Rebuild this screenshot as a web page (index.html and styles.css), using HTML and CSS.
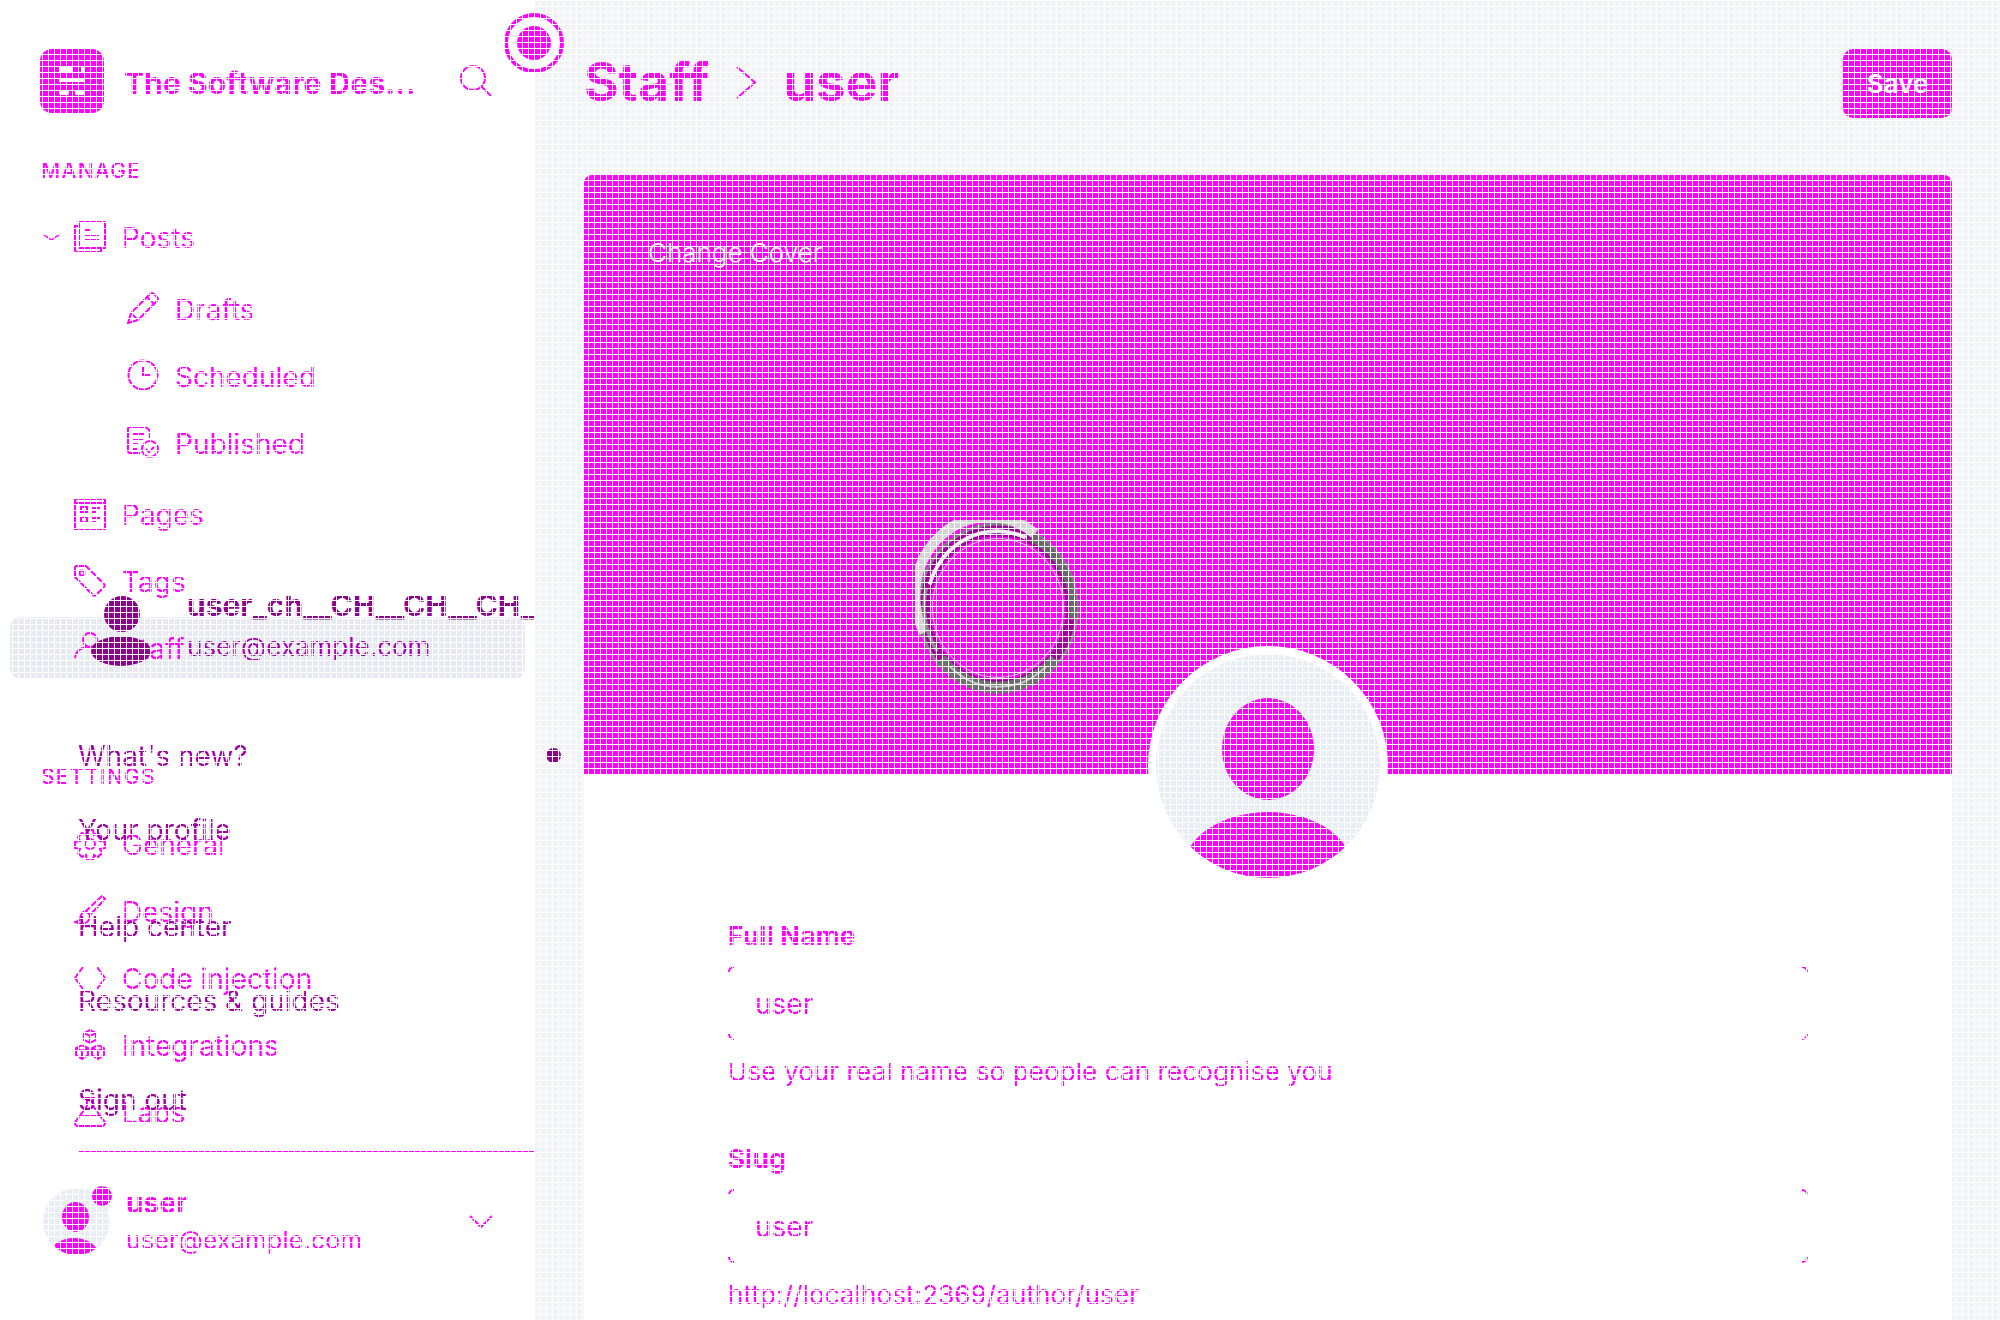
FILE: index.html
```html
<!DOCTYPE html>
<html>
	<head>
		<meta charset="UTF-8">
		<title>Staff - user</title>
		<link rel="stylesheet" href="styles.css">
	</head>
	<body>
		<div class="app">
			<aside class="side">
				<div class="brand">
					<svg class="logo" viewBox="0 0 64 64"><rect width="64" height="64" rx="12" fill="#f0f"/><path d="M19 18h14v5H19zM41 18h4v5h-4zM19 29h26v4H19z" fill="#fff"/><rect x="19" y="41" width="10" height="5" rx="2" fill="#fff"/><rect x="35" y="41" width="10" height="5" rx="2" fill="#fff"/></svg>
					<span class="brand-name">The Software Des...</span>
					<svg class="search" viewBox="0 0 32 32"><circle cx="13" cy="13" r="12"/><path d="M22 22l9 9"/></svg>
				</div>

				<div class="nav-title first">MANAGE</div>
				<ul class="nav first">
					<li class="row parent">
						<svg class="caret" viewBox="0 0 17 8"><path d="M0 1l8.5 6L17 1"/></svg>
						<svg class="ico" viewBox="0 0 32 32"><path d="M5 1h26v26H5zM5 5H1v24a2 2 0 0 0 2 2h24v-4M11 9h6M11 14h14M11 19h14"/></svg>
						<span>Posts</span>
					</li>
					<li class="row sub first-sub">
						<svg class="ico" viewBox="0 0 32 32"><path d="M1 31l3-10L23 2a3 3 0 0 1 4 0l3 3a3 3 0 0 1 0 4L11 28zM4 21l7 7M20 5l7 7M7 18l14-14M14 25L28 11"/></svg>
						<span>Drafts</span>
					</li>
					<li class="row sub">
						<svg class="ico" viewBox="0 0 32 32"><circle cx="16" cy="16" r="14.5"/><path d="M16 7v9h7"/></svg>
						<span>Scheduled</span>
					</li>
					<li class="row sub">
						<svg class="ico" viewBox="0 0 32 32"><path d="M13 27H3a2 2 0 0 1-2-2V3a2 2 0 0 1 2-2h16l4 4v8M6 8h12M6 13h10M6 18h6M6 23h4"/><circle cx="23" cy="23" r="8"/><path d="M19 23l3 3 5-5"/></svg>
						<span>Published</span>
					</li>
					<li class="row after-sub">
						<svg class="ico" viewBox="0 0 32 32"><path d="M1 1h30v30H1zM7 9h6v5H7zM7 19h6v5H7zM18 10h8M18 14h5M18 20h8M18 24h5M1 5h30"/></svg>
						<span>Pages</span>
					</li>
					<li class="row">
						<svg class="ico" viewBox="0 0 32 32"><path d="M1 3a2 2 0 0 1 2-2h9l18 18a2 2 0 0 1 0 3l-8 8a2 2 0 0 1-3 0L1 12z"/><circle cx="8" cy="8" r="2.5"/></svg>
						<span>Tags</span>
					</li>
					<li class="row active">
						<svg class="ico" viewBox="0 0 32 32"><circle cx="16" cy="8" r="7"/><path d="M1 26c1-8 7-11 15-11"/><circle cx="24" cy="25" r="1"/></svg>
						<span>Staff</span>
					</li>
				</ul>

				<div class="nav-title settings">SETTINGS</div>
				<ul class="nav second">
					<li class="row">
						<svg class="ico" viewBox="0 0 32 32"><circle cx="16" cy="16" r="5"/><path d="M13 2h6l1 5 4-2 4 4-2 4 5 1v6l-5 1 2 4-4 4-4-2-1 5h-6l-1-5-4 2-4-4 2-4-5-1v-6l5-1-2-4 4-4 4 2z"/></svg>
						<span>General</span>
					</li>
					<li class="row">
						<svg class="ico" viewBox="0 0 32 32"><path d="M28 1l3 3-15 16-4-4zM12 16c-5 0-5 5-6 8-1 2-3 3-5 3 5 3 15 3 15-7"/></svg>
						<span>Design</span>
					</li>
					<li class="row">
						<svg class="ico" viewBox="0 0 32 32"><path d="M9 5L1 16l8 11M23 5l8 11-8 11"/></svg>
						<span>Code injection</span>
					</li>
					<li class="row">
						<svg class="ico" viewBox="0 0 32 32"><path d="M16 1l6 3v7l-6 3-6-3V4zM16 7v7M10 4l6 3 6-3M8 16l6 3v7l-6 4-6-4v-7zM8 22v8M2 19l6 3 6-3M24 16l6 3v7l-6 4-6-4v-7zM24 22v8M18 19l6 3 6-3"/></svg>
						<span>Integrations</span>
					</li>
					<li class="row">
						<svg class="ico" viewBox="0 0 32 32"><path d="M11 2h10M13 2v8L2 25a3 3 0 0 0 3 5h22a3 3 0 0 0 3-5L19 10V2M7 20h18"/></svg>
						<span>Labs</span>
					</li>
				</ul>

				<div class="me">
					<div class="me-pic">
						<svg viewBox="0 0 67 67"><defs><clipPath id="mc"><circle cx="33.5" cy="33.5" r="33.5"/></clipPath></defs><g clip-path="url(#mc)"><rect width="67" height="67" fill="#e8eef3"/><ellipse cx="32.5" cy="29" rx="13.5" ry="15" fill="#f0f"/><ellipse cx="31" cy="66" rx="24" ry="16" fill="#f0f"/></g></svg>
						<i class="me-dot"></i>
					</div>
					<div class="me-text">
						<b>user</b>
						<span>user@example.com</span>
					</div>
					<svg class="me-caret" viewBox="0 0 24 13"><path d="M1 1l11 11L23 1"/></svg>
				</div>

				<div class="pulse"><i></i></div>

				<div class="menu">
					<div class="menu-head">
						<svg class="menu-pic" viewBox="0 0 60 70"><circle cx="31" cy="18" r="18"/><ellipse cx="30" cy="55" rx="30" ry="15"/></svg>
						<div class="menu-who">
							<b>user_ch__CH__CH__CH__CH</b>
							<span>user@example.com</span>
						</div>
					</div>
					<div class="menu-list top-group">
						<a>What's new?</a>
						<a>Your profile</a>
					</div>
					<div class="menu-list">
						<a>Help center</a>
						<a>Resources &amp; guides</a>
					</div>
					<div class="menu-list">
						<a>Sign out</a>
					</div>
					<div class="menu-line"></div>
				</div>
			</aside>

			<main class="main">
				<i class="whatsnew-dot"></i>
				<header class="top">
					<h1>Staff <svg class="crumb" viewBox="0 0 20 33"><path d="M1 1l18 15.5L1 32"/></svg> user</h1>
					<button class="save">Save</button>
				</header>

				<section class="card">
					<div class="cover">
						<span class="cover-btn">Change Cover</span>
						<svg class="ring" viewBox="0 0 180 180" preserveAspectRatio="none">
							<circle cx="90" cy="90" r="86" class="r-out"/>
							<circle cx="90" cy="90" r="79" class="r-mid"/>
							<circle cx="90" cy="90" r="71" class="r-thin"/>
							<path d="M10 115A80 80 0 0 1 130 14" class="r-light"/>
							<path d="M16 66A76 76 0 0 1 120 18" class="r-light2"/>
							<path d="M28 142A80 80 0 0 0 152 142" class="r-dark"/>
							<path d="M38 150A76 76 0 0 0 142 150" class="r-light3"/>
							<path d="M126 18A80 80 0 0 1 171 100" class="r-dark2"/>
							<path d="M12 70A80 80 0 0 0 24 134" class="r-dark3"/>
						</svg>
					</div>
					<svg class="avatar" viewBox="0 0 240 240">
						<defs><clipPath id="ac"><circle cx="120" cy="120" r="112"/></clipPath></defs>
						<circle cx="120" cy="120" r="120" fill="#fff"/>
						<g clip-path="url(#ac)">
							<rect width="240" height="240" fill="#e8eef3"/>
							<ellipse cx="120" cy="103" rx="46" ry="51" fill="#f0f"/>
							<ellipse cx="120" cy="226" rx="86" ry="60" fill="#f0f"/>
						</g>
					</svg>

					<form class="form">
						<div class="field">
							<label>Full Name</label>
							<div class="input">user<i class="tl"></i><i class="tr"></i><i class="bl"></i><i class="br"></i></div>
							<p>Use your real name so people can recognise you</p>
						</div>
						<div class="field">
							<label>Slug</label>
							<div class="input">user<i class="tl"></i><i class="tr"></i><i class="bl"></i><i class="br"></i></div>
							<p>http://localhost:2369/author/user</p>
						</div>
					</form>
				</section>
			</main>
		</div>
	</body>
</html>
```

FILE: styles.css
```css
*{
	box-sizing: border-box;
}
html,body{
	margin: 0;
	padding: 0;
	height: 1320px;
	overflow: hidden;
	background: #f1f3f7;
	font-family: Inter, "Liberation Sans", sans-serif;
	color: #f0f;
}
/* 6px white lattice over the whole page */
body::after{
	content: "";
	position: fixed;
	left: 0;
	top: 0;
	right: 0;
	bottom: 0;
	z-index: 100;
	pointer-events: none;
	background-image:
		repeating-linear-gradient(to right, #fff 0, #fff 1px, transparent 1px, transparent 6px),
		repeating-linear-gradient(to bottom, #fff 0, #fff 1px, transparent 1px, transparent 6px);
}
svg{
	display: block;
}
.app{
	display: flex;
	height: 1320px;
}

/* sidebar */
.side{
	position: relative;
	width: 535px;
	flex: none;
	background: #fff;
}
.brand{
	display: flex;
	align-items: center;
	height: 64px;
	margin: 49px 0 0 40px;
}
.logo{
	width: 64px;
	height: 64px;
	margin-right: 20px;
}
.brand-name{
	padding-top: 4px;
	font-size: 30px;
	font-weight: 700;
	letter-spacing: 0.1px;
	white-space: nowrap;
}
.search{
	width: 32px;
	height: 32px;
	margin-left: auto;
	margin-right: 43px;
	fill: none;
	stroke: #f0f;
	stroke-width: 2;
}
.nav-title{
	height: 24px;
	line-height: 24px;
	margin-left: 41px;
	font-size: 21px;
	font-weight: 500;
	letter-spacing: 1.3px;
}
.nav-title.first{
	margin-top: 46px;
}
.nav-title.settings{
	margin-top: 86px;
}
.nav{
	list-style: none;
	margin: 25px 0 0 0;
	padding: 0;
}
.nav.first{
	margin-top: 23px;
}
.nav.second{
	margin-top: 24px;
	margin-bottom: 45px;
}
.row{
	display: flex;
	align-items: center;
	gap: 16px;
	height: 62px;
	margin: 0 10px 5px 10px;
	padding-left: 64px;
	border-radius: 10px;
	font-size: 28px;
}
.row span{
	padding-top: 2px;
}
.row.parent{
	padding-left: 33px;
	gap: 0;
	margin-bottom: 9px;
}
.row.parent .ico{
	margin: 0 16px 0 14px;
}
.row.sub{
	padding-left: 117px;
}
.row.sub span{
	padding-top: 4px;
}
.row.after-sub{
	margin-top: 10px;
}
.row.active{
	background: #e8eaf2;
}
.ico{
	width: 32px;
	height: 32px;
	flex: none;
	fill: none;
	stroke: #f0f;
	stroke-width: 2;
}
.caret{
	width: 17px;
	height: 8px;
	fill: none;
	stroke: #f0f;
	stroke-width: 1.5;
}

/* account at the foot of the sidebar */
.me{
	display: flex;
	align-items: center;
	margin: 0 42px 0 43px;
}
.me-pic{
	position: relative;
	width: 67px;
	height: 67px;
}
.me-dot{
	position: absolute;
	right: -2px;
	top: -2px;
	width: 20px;
	height: 20px;
	border-radius: 50%;
	background: #f0f;
}
.me-text{
	display: flex;
	flex-direction: column;
	gap: 7px;
	margin-left: 16px;
	font-size: 25px;
	letter-spacing: 0.15px;
}
.me-text b{
	font-size: 28px;
	font-weight: 700;
	line-height: 30px;
}
.me-text span{
	line-height: 30px;
}
.me-caret{
	width: 24px;
	height: 13px;
	margin-left: auto;
	fill: none;
	stroke: #f0f;
	stroke-width: 2;
}

/* beacon over the sidebar edge */
.pulse{
	position: absolute;
	left: 504px;
	top: 13px;
	z-index: 20;
	display: flex;
	align-items: center;
	justify-content: center;
	width: 60px;
	height: 60px;
	border: 4px solid #f0f;
	border-radius: 50%;
	background: #fff;
}
.pulse i{
	width: 34px;
	height: 34px;
	border-radius: 50%;
	background: #f0f;
}

/* open user menu, its panel colour is gone, only the ink shows */
.menu{
	position: absolute;
	left: 78px;
	top: 596px;
	z-index: 10;
	width: 457px;
	overflow: hidden;
	color: #a000a4;
	font-size: 28px;
}
.menu-head{
	display: flex;
	height: 120px;
	margin-bottom: 3px;
}
.menu-pic{
	width: 60px;
	height: 70px;
	margin: 0 36px 0 13px;
	flex: none;
	fill: #8e008e;
}
.menu-who{
	display: flex;
	flex-direction: column;
	gap: 16px;
	min-width: 0;
}
.menu-who b{
	margin-top: -2px;
	font-size: 30px;
	font-weight: 700;
	line-height: 22px;
	color: #8e008e;
	white-space: nowrap;
}
.menu-who span{
	font-size: 26px;
	line-height: 30px;
	color: #a800b4;
}
.menu-list{
	display: flex;
	flex-direction: column;
	margin-bottom: 25px;
}
.menu-list.top-group{
	margin-bottom: 23px;
}
.menu-list a{
	height: 74px;
	line-height: 74px;
	white-space: nowrap;
}
.menu-line{
	height: 2px;
	margin-top: -11px;
	background: #f0f;
}

/* main column */
.main{
	position: relative;
	flex: 1;
	min-width: 0;
	padding: 0 48px 0 49px;
}
.whatsnew-dot{
	position: absolute;
	left: 11px;
	top: 748px;
	width: 15px;
	height: 15px;
	border-radius: 50%;
	background: #8e008e;
}
.top{
	display: flex;
	align-items: flex-start;
	justify-content: space-between;
	height: 175px;
}
.top h1{
	display: flex;
	align-items: center;
	gap: 27px;
	margin: 47px 0 0 0;
	height: 70px;
	font-size: 53px;
	font-weight: 700;
}
.crumb{
	width: 20px;
	height: 33px;
	fill: none;
	stroke: #f0f;
	stroke-width: 2;
}
.save{
	width: 109px;
	height: 69px;
	margin-top: 49px;
	border: 0;
	border-radius: 10px;
	background: #f0f;
	color: #fff;
	font: 600 26px Inter, "Liberation Sans", sans-serif;
}
.card{
	position: relative;
	height: 1200px;
	border-radius: 8px 8px 0 0;
	background: #fff;
}
.cover{
	position: relative;
	height: 599px;
	border-radius: 8px 8px 0 0;
	background: #f0f;
}
.cover-btn{
	position: absolute;
	left: 64px;
	top: 64px;
	font-size: 26px;
	font-weight: 300;
	line-height: 28px;
	color: #fff;
}
.ring{
	position: absolute;
	left: 331px;
	top: 345px;
	width: 166px;
	height: 176px;
	fill: none;
}
.r-out{
	stroke: #808080;
	stroke-width: 3;
}
.r-mid{
	stroke: #a3009f;
	stroke-width: 11;
}
.r-thin{
	stroke: #c8c8c8;
	stroke-width: 1;
}
.r-light{
	stroke: #d4d4d4;
	stroke-width: 11;
}
.r-light2{
	stroke: #ececec;
	stroke-width: 4;
}
.r-light3{
	stroke: #c4c4c4;
	stroke-width: 2;
}
.r-dark{
	stroke: #6e6e6e;
	stroke-width: 12;
}
.r-dark2{
	stroke: #686868;
	stroke-width: 8;
}
.r-dark3{
	stroke: #8a8a8a;
	stroke-width: 4;
}
.avatar{
	position: absolute;
	left: 564px;
	top: 471px;
	width: 240px;
	height: 240px;
}
.form{
	padding: 147px 144px 0 144px;
}
.field{
	margin-bottom: 59px;
}
.field label{
	display: block;
	height: 30px;
	line-height: 30px;
	margin-bottom: 15px;
	font-size: 26px;
	font-weight: 700;
	letter-spacing: 0.3px;
}
.input{
	position: relative;
	height: 74px;
	padding-left: 27px;
	line-height: 76px;
	font-size: 28px;
}
.input i{
	position: absolute;
	width: 6px;
	height: 6px;
	border: 0 solid #f0f;
}
.input .tl{
	left: 0;
	top: 0;
	border-width: 2px 0 0 2px;
	border-top-left-radius: 6px;
}
.input .tr{
	right: 0;
	top: 0;
	border-width: 2px 2px 0 0;
	border-top-right-radius: 6px;
}
.input .bl{
	left: 0;
	bottom: 0;
	border-width: 0 0 2px 2px;
	border-bottom-left-radius: 6px;
}
.input .br{
	right: 0;
	bottom: 0;
	border-width: 0 2px 2px 0;
	border-bottom-right-radius: 6px;
}
.field p{
	height: 26px;
	line-height: 26px;
	margin: 19px 0 0 0;
	font-size: 26px;
	letter-spacing: 0.1px;
}
```
